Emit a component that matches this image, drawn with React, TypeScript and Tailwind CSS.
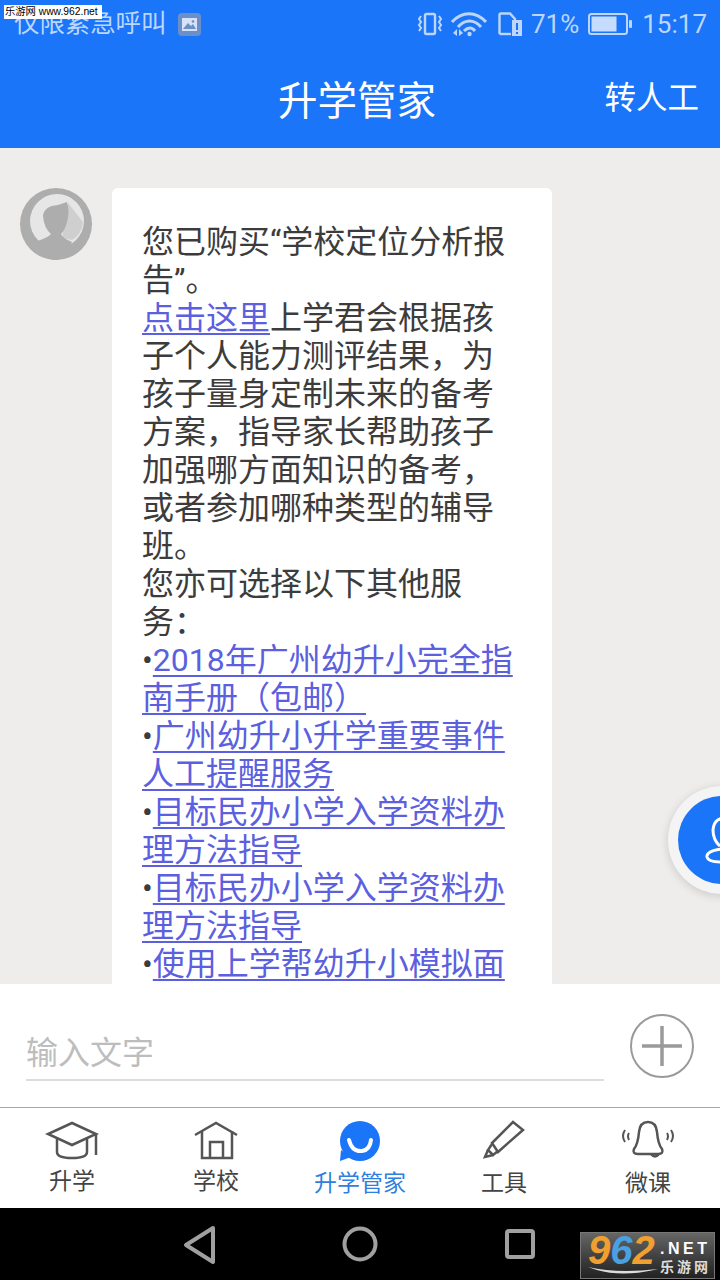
import { ReactNode } from "react";

const cjk = "font-['Roboto','Noto_Sans_CJK_SC',sans-serif]";

function StatusBar() {
  return (
    <div className="flex h-12 items-center justify-between pl-[14px] pr-[13px] text-[#bcd6ff]">
      <div className="flex items-center">
        <span className="text-[25.400px] leading-none">仅限紧急呼叫</span>
        <div className="ml-[12px] flex h-[23px] w-[23px] items-center justify-center rounded-[4px] bg-[#6b8fc9]">
          <svg width="15" height="13" viewBox="0 0 15 13">
            <rect width="15" height="13" fill="#d5e2f7" />
            <path d="M1 11 L6 5 L9 8 L11 6 L14 11 Z" fill="#6b8fc9" />
            <circle cx="11" cy="3.5" r="1.3" fill="#6b8fc9" />
          </svg>
        </div>
      </div>
      <div className="flex items-center">
        <svg width="26" height="24" viewBox="0 0 26 24" fill="none" stroke="#bcd6ff" strokeWidth="2">
          <rect x="8" y="2" width="10" height="20" rx="1.5" strokeWidth="2.4" />
          <path d="M4 4 L2 7 L4 10 L2 13 L4 16 L2 19 M22 4 L24 7 L22 10 L24 13 L22 16 L24 19" />
        </svg>
        <svg className="ml-[7px]" width="37" height="26" viewBox="0 0 37 26" fill="none" stroke="#bcd6ff" strokeWidth="3">
          <path d="M2 11 C12 0 26 0 36 11" />
          <path d="M8 16 C15 8 24 8 31 16" />
          <path d="M14 20 C18 16 22 16 25 20" />
          <circle cx="19.500" cy="23" r="2.200" fill="#bcd6ff" stroke="none" />
          <path d="M7 18 L3 22 L7 25 Z M9 18 L13 22 L9 25 Z" fill="#bcd6ff" stroke="none" />
        </svg>
        <svg className="ml-[11px]" width="24" height="24" viewBox="0 0 24 24" fill="none">
          <path d="M1.500 22 V3 Q1.500 1.500 3 1.500 H12 L17 7 V10" stroke="#bcd6ff" strokeWidth="2.400" />
          <path d="M1.500 22 H13" stroke="#bcd6ff" strokeWidth="2.400" />
          <rect x="14" y="8" width="10" height="16" fill="#bcd6ff" />
          <rect x="18" y="11" width="2" height="7" fill="#1a75f8" />
          <rect x="18" y="20" width="2" height="2" fill="#1a75f8" />
        </svg>
        <span className="ml-[9px] text-[26px] leading-none">71%</span>
        <svg className="ml-[9px]" width="44" height="24" viewBox="0 0 44 24" fill="none">
          <rect x="1" y="2" width="38" height="20" rx="2.500" stroke="#bcd6ff" strokeWidth="2" />
          <rect x="3.500" y="4.500" width="25" height="15" fill="#c6dcff" />
          <rect x="41" y="8" width="3" height="8" rx="1" fill="#bcd6ff" />
        </svg>
        <span className="ml-[10px] text-[26px] leading-none">15:17</span>
      </div>
    </div>
  );
}

function Header() {
  return (
    <div className="relative flex h-[100px] items-center justify-center pr-[6px] pt-[8px] text-white">
      <span className="text-[39.500px] leading-none">升学管家</span>
      <span className="absolute right-[21px] top-[35px] text-[31.500px] leading-none">转人工</span>
    </div>
  );
}

function Avatar() {
  return (
    <svg className="shrink-0" width="72" height="72" viewBox="0 0 72 72">
      <circle cx="36" cy="36" r="36" fill="#adadad" />
      <circle cx="37" cy="33" r="27" fill="#e6e6e6" />
      <path d="M48 15 L63 34 Q62 46 52 52 L42 50 Z" fill="#cfcfcf" />
      <path d="M23 28 Q24 18 38 17 L47 14 Q50 24 47 34 Q45 42 41 46 Q42 50 52 54 Q44 72 36 72 Q22 72 14 54 Q28 50 31 46 Q24 40 23 28 Z" fill="#adadad" />
    </svg>
  );
}

function A({ children }: { children: ReactNode }) {
  return <span className="text-[#5b5fe0] underline decoration-[2px] underline-offset-[4px]">{children}</span>;
}

function Bubble() {
  return (
    <div className="ml-5 w-[440px] rounded-t-[6px] bg-white pb-10 pl-[30px] pr-[30px] pt-[35px] text-[32px] leading-[38px] text-[#3c3c3c]">
      您已购买“学校定位分析报告”。
      <br />
      <A>点击这里</A>上学君会根据孩子个人能力测评结果&#xFF0C;为孩子量身定制未来的备考方案&#xFF0C;指导家长帮助孩子加强哪方面知识的备考&#xFF0C;或者参加哪种类型的辅导班。
      <br />
      您亦可选择以下其他服务&#xFF1A;
      <br />
      •<A>2018年广州幼升小完全指南手册&#xFF08;包邮&#xFF09;</A>
      <br />
      •<A>广州幼升小升学重要事件人工提醒服务</A>
      <br />
      •<A>目标民办小学入学资料办理方法指导</A>
      <br />
      •<A>目标民办小学入学资料办理方法指导</A>
      <br />
      •<A>使用上学帮幼升小模拟面</A>
    </div>
  );
}

function InputBar() {
  return (
    <div className="flex h-[124px] items-start border-b border-[#a8a8a8] bg-white pl-[26px]">
      <div className="mt-[49px] h-[48px] w-[578px] border-b-2 border-[#dddddd] text-[32px] leading-[40px] text-[#bdbdbd]">输入文字</div>
      <svg className="ml-[26px] mt-[30px]" width="64" height="64" viewBox="0 0 64 64" fill="none" stroke="#9a9a9a">
        <circle cx="32" cy="32" r="31" strokeWidth="2" />
        <path d="M12 32 H52 M32 12 V52" strokeWidth="3.500" />
      </svg>
    </div>
  );
}

const iconProps = { width: 56, height: 44, viewBox: "0 0 56 44", fill: "none", stroke: "#555", strokeWidth: 2.500 };

const tabs: { label: string; className: string; icon: ReactNode }[] = [
  {
    label: "升学",
    className: "text-[#444]",
    icon: (
      <svg {...iconProps}>
        <path d="M28 3 L4 14 L28 25 L52 14 Z" />
        <path d="M13 19 V32 Q13 38 28 38 Q43 38 43 32 V19" />
        <path d="M52 13 V35" />
      </svg>
    ),
  },
  {
    label: "学校",
    className: "text-[#444]",
    icon: (
      <svg {...iconProps}>
        <path d="M7 15 L28 3 L49 15" />
        <path d="M14 11 V38 H44 V11" />
        <path d="M22 38 V22 H35 V38" />
      </svg>
    ),
  },
  {
    label: "升学管家",
    className: "mt-[2px] text-[#2f7fe0]",
    icon: (
      <svg {...iconProps} stroke="none">
        <circle cx="28" cy="21" r="20" fill="#1a75f8" />
        <path d="M9 30 L8 41 L19 37 Z" fill="#1a75f8" />
        <path d="M17 20 Q20 32 30 31 Q38 30 39 20" stroke="#fff" strokeWidth="4" strokeLinecap="round" />
      </svg>
    ),
  },
  {
    label: "工具",
    className: "mt-[2px] text-[#444]",
    icon: (
      <svg {...iconProps}>
        <path d="M37 2 L47 10 L22 32 L16 23 Z" />
        <path d="M16 24 L12 30 L17 35 L22 31" />
        <path d="M12 30 L9 37 L17 35" />
      </svg>
    ),
  },
  {
    label: "微课",
    className: "mt-[2px] text-[#444]",
    icon: (
      <svg {...iconProps}>
        <path d="M28 2 Q36 2 37 12 Q38 24 42 29 Q44 34 38 34 H18 Q12 34 14 29 Q18 24 19 12 Q20 2 28 2 Z" />
        <path d="M31 34 Q35 39 39 34" />
        <path d="M5 10 Q1 16 5 22 M9 13 Q7 16 9 20 M51 10 Q55 16 51 22 M47 13 Q49 16 47 20" strokeWidth="2" />
      </svg>
    ),
  },
];

function TabBar() {
  return (
    <div className="grid h-[100px] grid-cols-5 bg-white">
      {tabs.map((t) => (
        <div key={t.label} className="flex flex-col items-center pt-[12px]">
          <div className="h-[47px]">{t.icon}</div>
          <span className={`text-[23px] leading-[30px] ${t.className}`}>{t.label}</span>
        </div>
      ))}
    </div>
  );
}

function NavBar() {
  return (
    <div className="relative flex h-[72px] items-center bg-black">
      <div className="grid w-[720px] grid-cols-3 items-center px-[182px]">
        <div className="flex justify-start">
          <svg className="mt-[3px]" width="36" height="42" viewBox="0 0 36 42" fill="none" stroke="#a0a0a0" strokeWidth="4" strokeLinejoin="round">
            <path d="M31 3 L4 20 L31 37 Z" />
          </svg>
        </div>
        <div className="flex justify-center">
          <svg width="36" height="36" viewBox="0 0 36 36" fill="none" stroke="#a0a0a0" strokeWidth="4">
            <circle cx="18" cy="18" r="15.500" />
          </svg>
        </div>
        <div className="flex justify-end">
          <svg className="mr-[3px]" width="30" height="30" viewBox="0 0 30 30" fill="none" stroke="#a0a0a0" strokeWidth="4" strokeLinejoin="round">
            <rect x="2" y="2" width="26" height="26" rx="2" />
          </svg>
        </div>
      </div>
      {/* site watermark */}
      <div className="absolute bottom-[1px] right-[5px] flex h-[47px] w-[135px] border border-[#777] bg-gradient-to-b from-[#666] to-[#222] pl-[7px]">
        <div className="flex w-[72px] flex-col">
          <span className="font-['Liberation_Sans'] text-[40px] font-bold italic leading-[34px]">
            <span className="text-[#f0a030]">9</span>
            <span className="text-[#4aa0e0]">6</span>
            <span className="text-[#f0a030]">2</span>
          </span>
          <svg width="70" height="10" viewBox="0 0 70 10">
            <path d="M0 0 Q30 12 70 2 Q30 7 0 0 Z" fill="#ddd" />
          </svg>
        </div>
        <div className="flex flex-col items-start pt-[7px]">
          <span className="font-['Liberation_Sans'] text-[16px] font-bold leading-[18px] tracking-[3.500px] text-white">.NET</span>
          <span className="text-[14px] font-bold leading-[18px] tracking-[3px] text-[#ddd]">乐游网</span>
        </div>
      </div>
    </div>
  );
}

export default function App() {
  return (
    <div className={`relative flex h-[1280px] w-[720px] flex-col overflow-hidden bg-[#eeedeb] ${cjk}`}>
      <div className="bg-[#1a75f8]">
        <StatusBar />
        <Header />
      </div>
      <div className="flex h-[836px] items-start overflow-hidden pl-5 pt-10">
        <Avatar />
        <Bubble />
      </div>
      <InputBar />
      <TabBar />
      <NavBar />

      {/* floating contact button */}
      <div className="absolute left-[668px] top-[786px] flex h-[108px] w-[108px] items-center justify-center rounded-full bg-[#f4f4f4] shadow-[0_2px_10px_rgba(0,0,0,0.15)]">
        <div className="h-[88px] w-[88px] rounded-full bg-[#1a75f8]">
          <svg width="88" height="88" viewBox="0 0 88 88" fill="none" stroke="#fff" strokeWidth="3">
            <path d="M52 22 Q36 20 35 34 Q35 44 42 50" />
            <path d="M44 53 Q28 55 29 61 Q30 66 44 66 H60" />
          </svg>
        </div>
      </div>

      <div className="absolute left-[4px] top-[5px] flex h-[14px] w-[98px] items-center whitespace-nowrap bg-white pl-[1px] font-['Liberation_Sans','Noto_Sans_CJK_SC',sans-serif] text-[10.300px] text-black">
        乐游网 www.962.net
      </div>
    </div>
  );
}
